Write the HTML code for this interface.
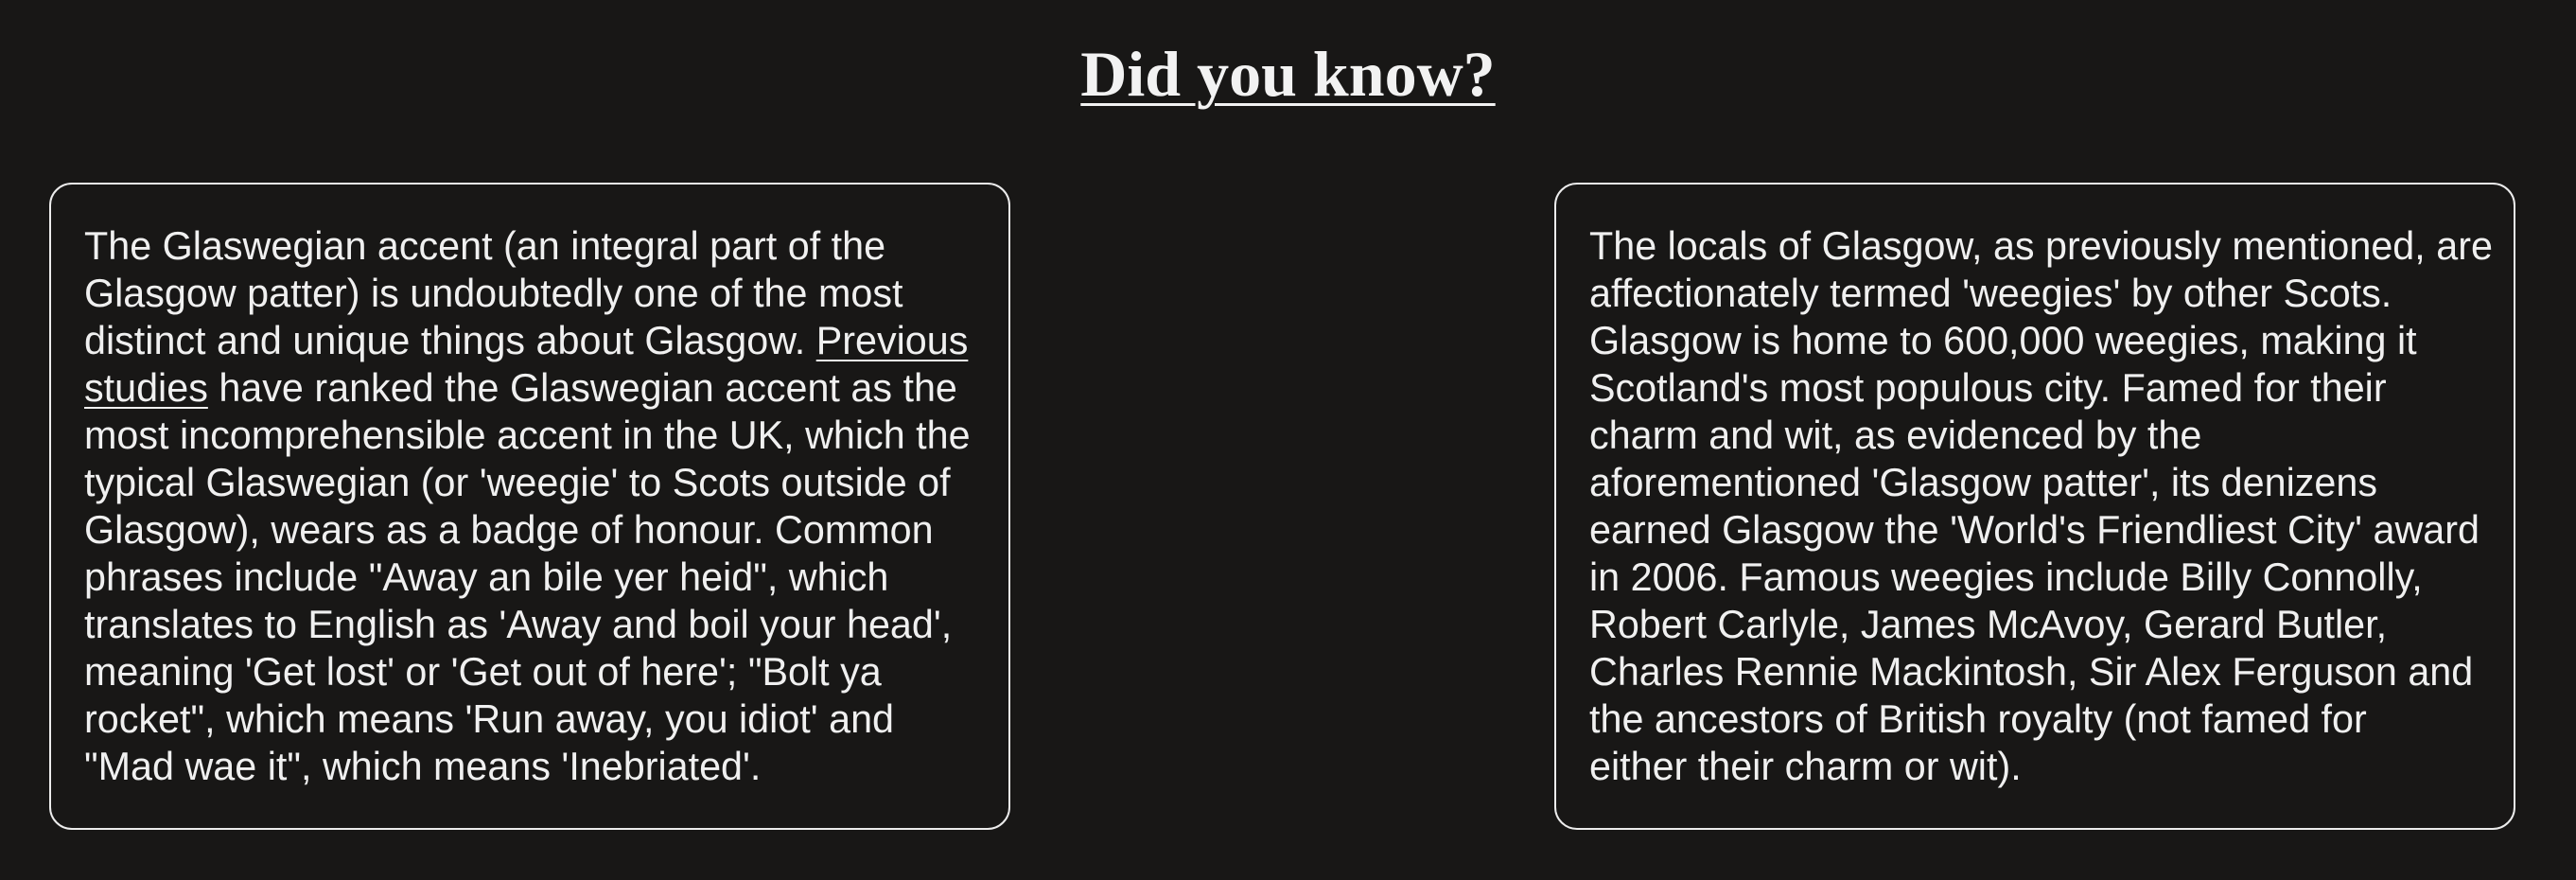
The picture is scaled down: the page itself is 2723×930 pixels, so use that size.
<!DOCTYPE html>
<html><head><meta charset="utf-8">
<style>
html,body{margin:0;padding:0;background:#181716;width:2723px;height:930px;overflow:hidden;}
h1{position:absolute;left:0;width:2723px;top:44px;margin:0;text-align:center;font-family:"Liberation Serif",serif;font-weight:bold;font-size:68px;color:#f2f2f2;text-decoration:underline;text-decoration-thickness:3px;text-underline-offset:8px;line-height:1;}
.box{position:absolute;top:193px;width:1012px;height:680px;border:2px solid #ececec;border-radius:24px;box-sizing:content-box;}
.t{position:absolute;left:35px;top:40px;white-space:nowrap;font-family:"Liberation Sans",sans-serif;font-size:41.3px;line-height:50px;color:#f0f0f0;}
.t u{text-underline-offset:6px;text-decoration-thickness:2px;}
</style></head><body>
<h1>Did you know?</h1>
<div class="box" style="left:52px"><div class="t">The Glaswegian accent (an integral part of the<br>Glasgow patter) is undoubtedly one of the most<br>distinct and unique things about Glasgow. <u>Previous</u><br><u>studies</u> have ranked the Glaswegian accent as the<br>most incomprehensible accent in the UK, which the<br>typical Glaswegian (or 'weegie' to Scots outside of<br>Glasgow), wears as a badge of honour. Common<br>phrases include "Away an bile yer heid", which<br>translates to English as 'Away and boil your head',<br>meaning 'Get lost' or 'Get out of here'; "Bolt ya<br>rocket", which means 'Run away, you idiot' and<br>"Mad wae it", which means 'Inebriated'.</div></div>
<div class="box" style="left:1643px"><div class="t">The locals of Glasgow, as previously mentioned, are<br>affectionately termed 'weegies' by other Scots.<br>Glasgow is home to 600,000 weegies, making it<br>Scotland's most populous city. Famed for their<br>charm and wit, as evidenced by the<br>aforementioned 'Glasgow patter', its denizens<br>earned Glasgow the 'World's Friendliest City' award<br>in 2006. Famous weegies include Billy Connolly,<br>Robert Carlyle, James McAvoy, Gerard Butler,<br>Charles Rennie Mackintosh, Sir Alex Ferguson and<br>the ancestors of British royalty (not famed for<br>either their charm or wit).</div></div>
</body></html>
